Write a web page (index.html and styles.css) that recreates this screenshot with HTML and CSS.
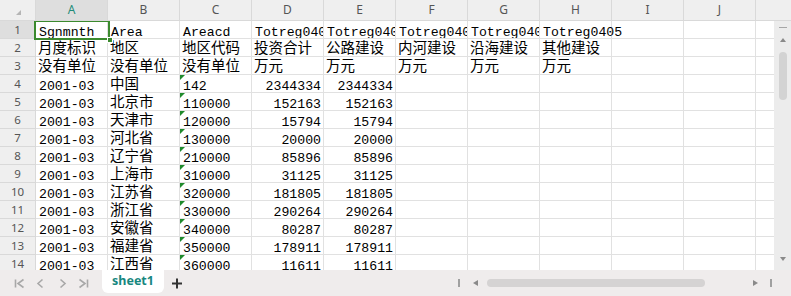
FILE: index.html
```html
<!DOCTYPE html>
<html lang="zh-CN">
<head>
<meta charset="utf-8">
<title>sheet1</title>
<link rel="stylesheet" href="styles.css">
</head>
<body>
<div class="app">
  <div class="sheet">
    <div class="hdr">
      <div class="corner"><span class="corner-tri"></span></div>
      <div class="ch active">A</div><div class="ch">B</div><div class="ch">C</div><div class="ch">D</div><div class="ch">E</div><div class="ch">F</div><div class="ch">G</div><div class="ch">H</div><div class="ch">I</div><div class="ch">J</div><div class="ch rest"></div>
    </div>
    <div class="body">
      <div class="rows">
        <div class="row"><div class="rh active">1</div><div class="c t">Sgnmnth</div><div class="c t">Area</div><div class="c t">Areacd</div><div class="c t">Totreg0401</div><div class="c t">Totreg0402</div><div class="c t">Totreg0403</div><div class="c t">Totreg0404</div><div class="c t spill">Totreg0405</div><div class="c"></div><div class="c"></div><div class="c fill"></div></div>
        <div class="row"><div class="rh">2</div><div class="c z">月度标识</div><div class="c z">地区</div><div class="c z">地区代码</div><div class="c z">投资合计</div><div class="c z">公路建设</div><div class="c z">内河建设</div><div class="c z">沿海建设</div><div class="c z">其他建设</div><div class="c"></div><div class="c"></div><div class="c fill"></div></div>
        <div class="row"><div class="rh">3</div><div class="c z">没有单位</div><div class="c z">没有单位</div><div class="c z">没有单位</div><div class="c z">万元</div><div class="c z">万元</div><div class="c z">万元</div><div class="c z">万元</div><div class="c z">万元</div><div class="c"></div><div class="c"></div><div class="c fill"></div></div>
        <div class="row"><div class="rh">4</div><div class="c t">2001-03</div><div class="c z">中国</div><div class="c t flag">142</div><div class="c t n">2344334</div><div class="c t n">2344334</div><div class="c"></div><div class="c"></div><div class="c"></div><div class="c"></div><div class="c"></div><div class="c fill"></div></div>
        <div class="row"><div class="rh">5</div><div class="c t">2001-03</div><div class="c z">北京市</div><div class="c t flag">110000</div><div class="c t n">152163</div><div class="c t n">152163</div><div class="c"></div><div class="c"></div><div class="c"></div><div class="c"></div><div class="c"></div><div class="c fill"></div></div>
        <div class="row"><div class="rh">6</div><div class="c t">2001-03</div><div class="c z">天津市</div><div class="c t flag">120000</div><div class="c t n">15794</div><div class="c t n">15794</div><div class="c"></div><div class="c"></div><div class="c"></div><div class="c"></div><div class="c"></div><div class="c fill"></div></div>
        <div class="row"><div class="rh">7</div><div class="c t">2001-03</div><div class="c z">河北省</div><div class="c t flag">130000</div><div class="c t n">20000</div><div class="c t n">20000</div><div class="c"></div><div class="c"></div><div class="c"></div><div class="c"></div><div class="c"></div><div class="c fill"></div></div>
        <div class="row"><div class="rh">8</div><div class="c t">2001-03</div><div class="c z">辽宁省</div><div class="c t flag">210000</div><div class="c t n">85896</div><div class="c t n">85896</div><div class="c"></div><div class="c"></div><div class="c"></div><div class="c"></div><div class="c"></div><div class="c fill"></div></div>
        <div class="row"><div class="rh">9</div><div class="c t">2001-03</div><div class="c z">上海市</div><div class="c t flag">310000</div><div class="c t n">31125</div><div class="c t n">31125</div><div class="c"></div><div class="c"></div><div class="c"></div><div class="c"></div><div class="c"></div><div class="c fill"></div></div>
        <div class="row"><div class="rh">10</div><div class="c t">2001-03</div><div class="c z">江苏省</div><div class="c t flag">320000</div><div class="c t n">181805</div><div class="c t n">181805</div><div class="c"></div><div class="c"></div><div class="c"></div><div class="c"></div><div class="c"></div><div class="c fill"></div></div>
        <div class="row"><div class="rh">11</div><div class="c t">2001-03</div><div class="c z">浙江省</div><div class="c t flag">330000</div><div class="c t n">290264</div><div class="c t n">290264</div><div class="c"></div><div class="c"></div><div class="c"></div><div class="c"></div><div class="c"></div><div class="c fill"></div></div>
        <div class="row"><div class="rh">12</div><div class="c t">2001-03</div><div class="c z">安徽省</div><div class="c t flag">340000</div><div class="c t n">80287</div><div class="c t n">80287</div><div class="c"></div><div class="c"></div><div class="c"></div><div class="c"></div><div class="c"></div><div class="c fill"></div></div>
        <div class="row"><div class="rh">13</div><div class="c t">2001-03</div><div class="c z">福建省</div><div class="c t flag">350000</div><div class="c t n">178911</div><div class="c t n">178911</div><div class="c"></div><div class="c"></div><div class="c"></div><div class="c"></div><div class="c"></div><div class="c fill"></div></div>
        <div class="row"><div class="rh">14</div><div class="c t">2001-03</div><div class="c z">江西省</div><div class="c t flag">360000</div><div class="c t n">11611</div><div class="c t n">11611</div><div class="c"></div><div class="c"></div><div class="c"></div><div class="c"></div><div class="c"></div><div class="c fill"></div></div>
        <div class="sel"><span class="handle"></span></div>
      </div>
      <div class="vscroll">
        <span class="vs-dash"></span>
        <span class="vs-up"></span>
        <span class="vs-thumb"></span>
        <span class="vs-space"></span>
        <span class="vs-down"></span>
      </div>
    </div>
  </div>
  <div class="tabbar">
    <div class="nav">
      <svg class="nav-ico" width="22" height="26" viewBox="0 0 22 26"><path d="M7.5 9.5V17.5" /><path d="M15.5 9.5L10 13.5L15.5 17.5" /></svg>
      <svg class="nav-ico" width="22" height="26" viewBox="0 0 22 26"><path d="M12.5 9.5L8 13.5L12.5 17.5" /></svg>
      <svg class="nav-ico" width="22" height="26" viewBox="0 0 22 26"><path d="M8.5 9.5L13 13.5L8.5 17.5" /></svg>
      <svg class="nav-ico" width="22" height="26" viewBox="0 0 22 26"><path d="M5.5 9.5L11 13.5L5.5 17.5" /><path d="M13.5 9.5V17.5" /></svg>
    </div>
    <div class="tab">sheet1</div>
    <div class="add"><svg width="26" height="26" viewBox="0 0 26 26"><path d="M8 13.5H18M13 8.5V18.5" /></svg></div>
    <div class="hs">
      <span class="hs-sep"></span>
      <span class="hs-left"></span>
      <span class="hs-thumb"></span>
      <span class="hs-space"></span>
      <span class="hs-right"></span>
      <span class="hs-sep end"></span>
    </div>
  </div>
</div>
</body>
</html>
```

FILE: styles.css
```css
* { box-sizing: border-box; }
html, body { margin: 0; padding: 0; background: #fff; }
.app { width: 791px; height: 296px; overflow: hidden; display: flex; flex-direction: column; }
.sheet { height: 270px; display: flex; flex-direction: column; overflow: hidden; }

.hdr { display: flex; height: 21px; background: #efefef; border-bottom: 1px solid #d9d9d9; flex: none; }
.corner { width: 36px; border-right: 1px solid #d9d9d9; position: relative; }
.corner-tri { position: absolute; left: 16px; top: 10px; width: 0; height: 0; border-left: 5px solid transparent; border-bottom: 5px solid #b5b5b5; }
.ch { width: 72px; border-right: 1px solid #d9d9d9; font-family: "Noto Sans", sans-serif; font-size: 12px; color: #555; text-align: center; line-height: 20px; }
.ch.active { background: #dedede; color: #1f8c78; }
.ch.rest { flex: 1; border-right: none; }

.body { display: flex; flex: 1; min-height: 0; }
.rows { width: 774px; position: relative; overflow: hidden; }
.row { display: flex; height: 18px; }
.rh { width: 36px; flex: none; background: #efefef; border-right: 1px solid #d9d9d9; border-bottom: 1px solid #d9d9d9; font-family: "Noto Sans", sans-serif; font-size: 11.5px; color: #555; text-align: center; line-height: 17px; }
.rh.active { background: #dedede; }
.c { width: 72px; flex: none; height: 18px; border-right: 1px solid #e1e1e1; border-bottom: 1px solid #e1e1e1; overflow: hidden; white-space: nowrap; color: #000; position: relative; }
.c.fill { flex: 1; border-right: none; }
.t { font-family: "Liberation Mono", monospace; font-size: 13.2px; line-height: 13px; padding-top: 5px; padding-left: 3px; }
.z { font-family: "Noto Sans CJK SC", sans-serif; font-size: 14.5px; line-height: 15.4px; padding-left: 2px; }
.n { text-align: right; padding-left: 0; padding-right: 2px; }
.spill { overflow: visible; }
.flag::before { content: ""; position: absolute; left: 0; top: 0; width: 0; height: 0; border-top: 5px solid #1f8a2c; border-right: 5px solid transparent; }

.sel { position: absolute; left: 34px; top: -1px; width: 76px; height: 20px; border: 2px solid #3b8a2e; }
.handle { position: absolute; right: -5px; bottom: -5px; width: 6px; height: 6px; background: #3b8a2e; border: 1px solid #fff; }

.vscroll { width: 17px; background: #ececec; display: flex; flex-direction: column; align-items: flex-start; padding-left: 5px; }
.vs-dash { display: block; width: 8px; height: 1px; background: #a6a6a6; margin-top: 6px; }
.vs-up { display: block; width: 0; height: 0; margin-top: 10px; margin-left: 1px; border-left: 3px solid transparent; border-right: 3px solid transparent; border-bottom: 4px solid #8a8a8a; }
.vs-thumb { display: block; width: 8px; height: 48px; margin-top: 10px; border-radius: 4px; background: #d3d3d3; }
.vs-space { flex: 1; }
.vs-down { display: block; width: 0; height: 0; margin-bottom: 9px; margin-left: 1px; border-left: 3px solid transparent; border-right: 3px solid transparent; border-top: 4px solid #8a8a8a; }

.tabbar { height: 26px; flex: none; background: #efecec; display: flex; align-items: flex-start; }
.nav { display: flex; padding-left: 8px; }
.nav-ico { display: block; fill: none; stroke: #a8a8a8; stroke-width: 1.6; }
.tab { margin-left: 6px; width: 62px; height: 23px; background: #fff; border-radius: 0 0 6px 6px; font-family: "Noto Sans", sans-serif; font-weight: 700; font-size: 12.5px; color: #17877f; text-align: center; line-height: 22px; }
.add { width: 26px; height: 26px; }
.add svg { display: block; fill: none; stroke: #333; stroke-width: 2; }
.hs { margin-left: auto; width: 336px; height: 26px; display: flex; align-items: center; }
.hs-sep { display: block; width: 2px; height: 8px; background: #a0a0a0; margin-left: 3px; }
.hs-sep.end { margin-left: 12px; margin-right: 19px; }
.hs-left { display: block; width: 0; height: 0; margin-left: 13px; border-top: 3px solid transparent; border-bottom: 3px solid transparent; border-right: 5px solid #8a8a8a; }
.hs-thumb { display: block; width: 218px; height: 8px; margin-left: 9px; border-radius: 4px; background: #d5d3d3; }
.hs-space { flex: 1; }
.hs-right { display: block; width: 0; height: 0; border-top: 3px solid transparent; border-bottom: 3px solid transparent; border-left: 5px solid #8a8a8a; }
```
